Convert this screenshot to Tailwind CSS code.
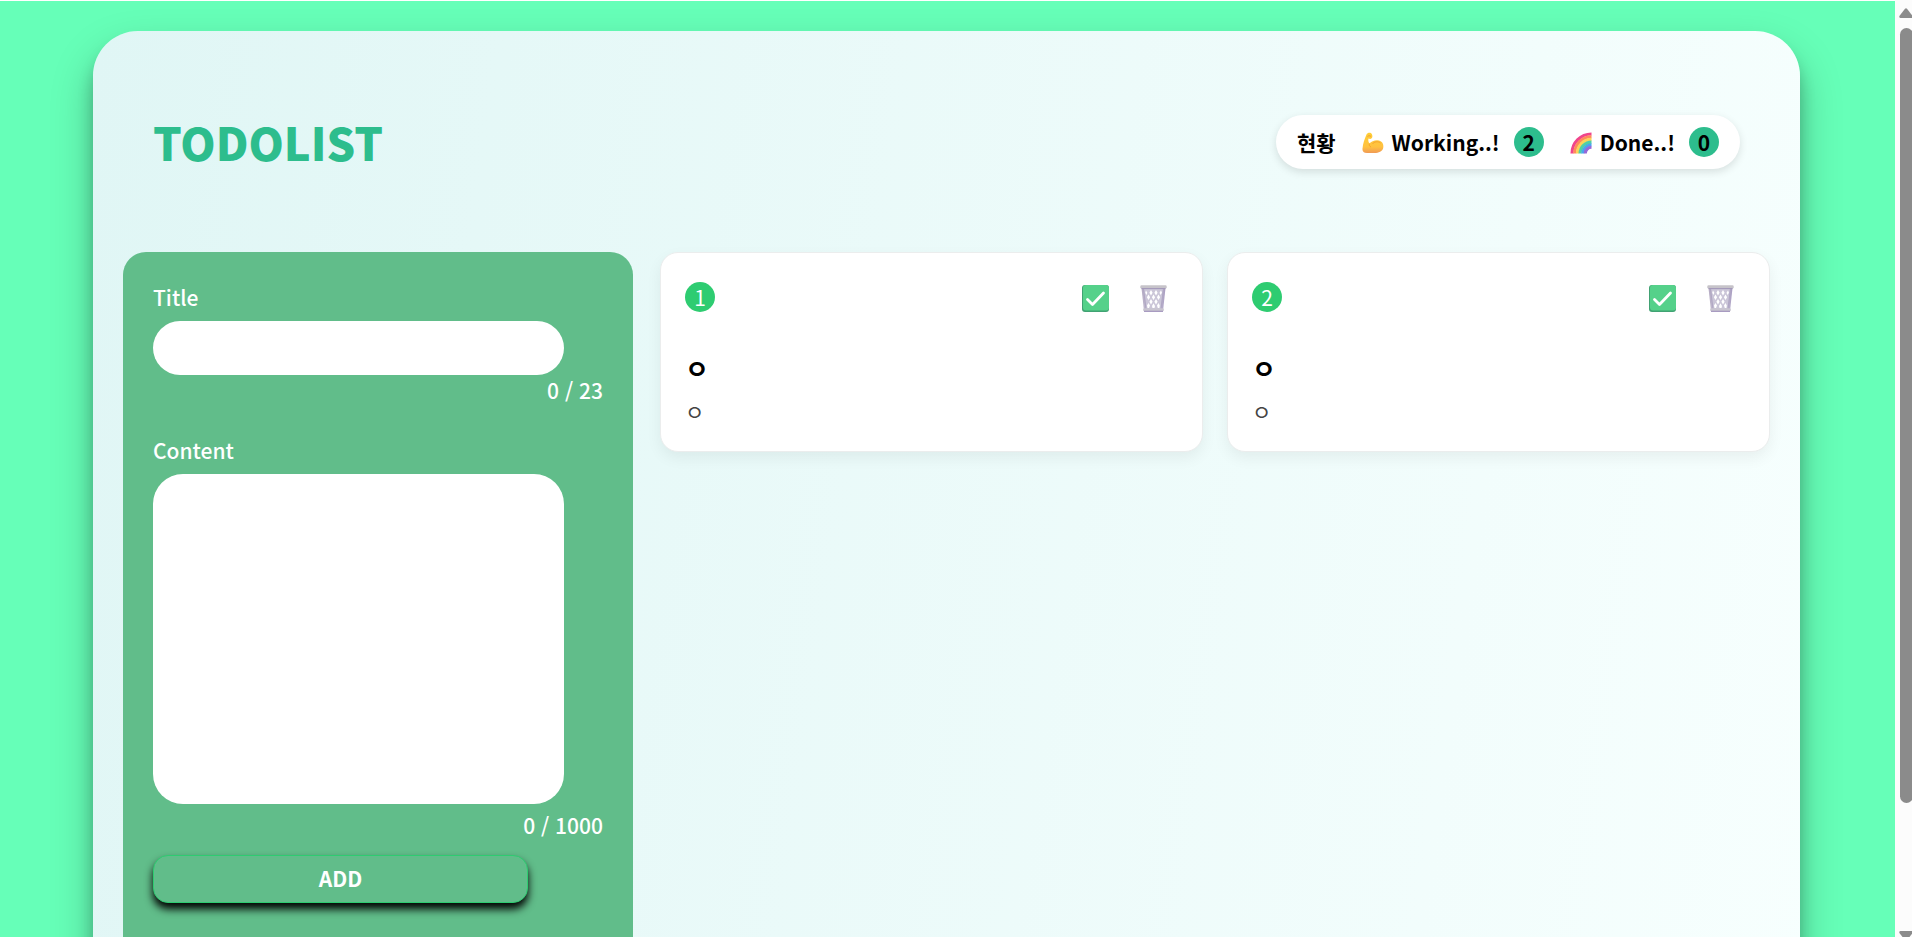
<!DOCTYPE html>
<html lang="ko">
<head>
<meta charset="utf-8">
<title>TODOLIST</title>
<script src="https://cdn.jsdelivr.net/npm/@tailwindcss/browser@4"></script>
</head>
<body class="h-screen overflow-hidden flex bg-white text-black text-[21px] leading-[30px] font-['Noto_Sans_CJK_KR',sans-serif]">
<svg class="absolute size-0" aria-hidden="true">
  <defs>
    <linearGradient id="skin" x1="0" y1="0" x2="0" y2="1"><stop offset="0" stop-color="#ffcf35"/><stop offset=".7" stop-color="#ffc140"/><stop offset="1" stop-color="#f09a55"/></linearGradient>
    <linearGradient id="bin" x1="0" y1="0" x2="1" y2="0"><stop offset="0" stop-color="#b3a9c2"/><stop offset=".5" stop-color="#dedbe6"/><stop offset="1" stop-color="#a79bc0"/></linearGradient>
    <symbol id="check" viewBox="0 0 27 27">
      <rect width="27" height="27" rx="3" fill="#41a273"/>
      <rect x="1" width="26" height="25.500" rx="3" fill="#55d18a"/>
      <path d="M5.500 14.500L10.500 19.500L21.500 8" fill="none" stroke="#fff" stroke-width="2.800" stroke-linecap="round" stroke-linejoin="round"/>
    </symbol>
    <symbol id="trash" viewBox="0 0 27 27">
      <path d="M1.500 3H25.500L23 26H4Z" fill="url(#bin)"/>
      <path d="M4 4H23L21 24H6Z" fill="#cbc6d8"/>
      <path d="M6 5.500l1.300 2.200L6.500 10 5.200 7.800ZM11 5l1.600 2.700L11 10.400 9.400 7.700ZM16 5l1.600 2.700L16 10.400 14.400 7.700ZM21 5.500l1 2.200L20.500 10 19.500 7.700ZM8.500 9.500l1.600 2.700L8.500 15 6.900 12.200ZM13.500 9.500l1.600 2.700L13.500 15 11.900 12.200ZM18.500 9.500l1.600 2.700L18.500 15 16.900 12.200ZM11 14l1.600 2.700L11 19.400 9.400 16.700ZM16 14l1.600 2.700L16 19.400 14.400 16.700ZM8.500 18l1.500 2.600L9 23H7.500L7 20.500ZM13.500 18.300l1.500 2.600L14.500 23H12.500L12 20.900ZM18.500 18l1.300 2.500L19.400 23H17.800L17 20.600Z" fill="#fff"/>
      <path d="M3.500 4L6 24M23.500 4L21 24" stroke="#b0a7c4" stroke-width="1.200"/>
      <rect x=".3" y=".3" width="26.400" height="3.200" rx="1.200" fill="#c6c3c9"/>
      <path d="M1.500 3.600H25.500" stroke="#a196b8"/>
      <rect x="3.200" y="23.300" width="20.600" height="3" rx="1.200" fill="#c9c5d0"/>
      <path d="M4 26.300H23" stroke="#9586b5"/>
    </symbol>
  </defs>
</svg>

<div class="flex-1 min-w-0 mt-px bg-[#66ffb8] pt-[30px] pl-[93px] pr-[95px]">
  <main class="min-h-[1100px] rounded-t-[45px] bg-[linear-gradient(98deg,#e0f6f5,#f7fffe)] shadow-[0_21px_42px_rgba(0,0,0,0.25),0_15px_15px_rgba(0,0,0,0.22)] px-[30px]">
    <header class="flex items-center justify-between h-[221px] px-[30px]">
      <h1 class="text-[45px] leading-[60px] font-black text-[#2dbd8d]">TODOLIST</h1>
      <div class="flex items-center h-[54px] rounded-full bg-white px-[21px] font-bold shadow-[0_3px_9px_rgba(0,0,0,0.12)]">
        <span>현황</span>
        <svg class="mt-[2px] ml-[26px] size-[22px]" viewBox="0 0 22 22" aria-hidden="true"><path d="M4.500 2.500C5.500.3 8.800.1 9.800 2C10.800 4 10.500 6 9 6.800C8 7.200 7 6.600 6.500 6.500C6 8.500 6.500 10.500 7.500 11.500C10 8 19 6 21 12C22.500 18 19 20.500 14 21H5C1.500 21 .2 19.500.5 16.500C1 11.500 2.500 7 4.500 2.500Z" fill="url(#skin)"/><path d="M7.500 11.500C7 13 7.500 14.500 9 15M10.500 12C12 9.500 16 9 18.500 11" fill="none" stroke="#f6a32f" stroke-width="1"/><path d="M5.500 4.500C6.500 3.500 8 3.500 9 4.500" fill="none" stroke="#ef9a3d"/></svg>
        <span class="ml-2">Working..!</span>
        <span class="ml-[14px] size-[30px] rounded-full bg-[#2dbd8d] flex items-center justify-center">2</span>
        <svg class="mt-[2px] ml-[26px] size-[22px]" viewBox="0 0 22 22" aria-hidden="true"><g fill="none" stroke-width="3.100"><path d="M2 21.500A19.500 19.500 0 0 1 21.500 2" stroke="#f0458c"/><path d="M4.700 21.500A16.800 16.800 0 0 1 21.500 4.700" stroke="#ff8a5c"/><path d="M7.400 21.500A14.100 14.100 0 0 1 21.500 7.400" stroke="#fbd35a"/><path d="M10.100 21.500A11.400 11.400 0 0 1 21.500 10.100" stroke="#4fd0a6"/><path d="M12.800 21.500A8.700 8.700 0 0 1 21.500 12.800" stroke="#4aa5ee"/><path d="M15.300 21.500A6.200 6.200 0 0 1 21.500 15.300" stroke="#9569d8"/></g></svg>
        <span class="ml-2">Done..!</span>
        <span class="ml-[14px] size-[30px] rounded-full bg-[#2dbd8d] flex items-center justify-center">0</span>
      </div>
    </header>

    <div class="flex items-start">
      <form class="w-[510px] shrink-0 min-h-[800px] rounded-[23px] bg-[#61bd8a] p-[30px] text-white font-medium">
        <label for="title" class="block">Title</label>
        <input id="title" type="text" maxlength="23" class="mt-[9px] block w-[411px] h-[54px] rounded-full bg-white px-5 text-black outline-none">
        <p class="text-right">0 / 23</p>
        <label for="content" class="mt-[30px] block">Content</label>
        <textarea id="content" maxlength="1000" class="mt-[9px] block w-[411px] h-[330px] resize-none rounded-[30px] bg-white p-5 text-black outline-none"></textarea>
        <p class="mt-[6px] text-right">0 / 1000</p>
        <button type="button" class="mt-[15px] block w-[375px] h-12 rounded-[15px] border border-[#2ecc71] bg-[#61bd8a] pb-[2px] font-bold shadow-[0_6px_9px_black]">ADD</button>
      </form>

      <section class="ml-[27px] flex-1 grid grid-cols-2 gap-6">
        <article class="h-[200px] rounded-[18px] border border-[#ebeded] bg-white pl-6 pr-[23px] pt-[29px] shadow-[0_6px_15px_rgba(0,0,0,0.06)]">
          <div class="flex items-center">
            <span class="size-[30px] rounded-full bg-[#2ecc71] text-white flex items-center justify-center">1</span>
            <button type="button" aria-label="완료" class="ml-auto mt-[3px]"><svg class="size-[27px]"><use href="#check"/></svg></button>
            <button type="button" aria-label="삭제" class="ml-[31px] mr-3 mt-[3px]"><svg class="size-[27px]"><use href="#trash"/></svg></button>
          </div>
          <h2 class="mt-[37px] text-[26px] leading-[38px] font-bold">ㅇ</h2>
          <p class="mt-2 leading-8 text-[#444]">ㅇ</p>
        </article>
        <article class="h-[200px] rounded-[18px] border border-[#ebeded] bg-white pl-6 pr-[23px] pt-[29px] shadow-[0_6px_15px_rgba(0,0,0,0.06)]">
          <div class="flex items-center">
            <span class="size-[30px] rounded-full bg-[#2ecc71] text-white flex items-center justify-center">2</span>
            <button type="button" aria-label="완료" class="ml-auto mt-[3px]"><svg class="size-[27px]"><use href="#check"/></svg></button>
            <button type="button" aria-label="삭제" class="ml-[31px] mr-3 mt-[3px]"><svg class="size-[27px]"><use href="#trash"/></svg></button>
          </div>
          <h2 class="mt-[37px] text-[26px] leading-[38px] font-bold">ㅇ</h2>
          <p class="mt-2 leading-8 text-[#444]">ㅇ</p>
        </article>
      </section>
    </div>
  </main>
</div>

<div class="w-[17px] shrink-0 bg-[#fcfcfc] flex flex-col items-end overflow-hidden" aria-hidden="true">
  <svg class="mt-2 -mr-px w-[14px] h-[10px] shrink-0" viewBox="0 0 14 10"><path d="M6 .8Q7 -.3 8 .8L13.600 8Q14 10 12.500 10H1.500Q0 10 .4 8Z" fill="#8b8b8b"/></svg>
  <div class="mt-[10px] -mr-px w-[13px] h-[775px] shrink-0 rounded-full bg-[#8b8b8b]"></div>
  <svg class="mt-auto -mb-1 -mr-px w-[14px] h-[10px] shrink-0" viewBox="0 0 14 10"><path d="M6 9.200Q7 10.300 8 9.200L13.600 2Q14 0 12.500 0H1.500Q0 0 .4 2Z" fill="#8b8b8b"/></svg>
</div>
</body>
</html>
